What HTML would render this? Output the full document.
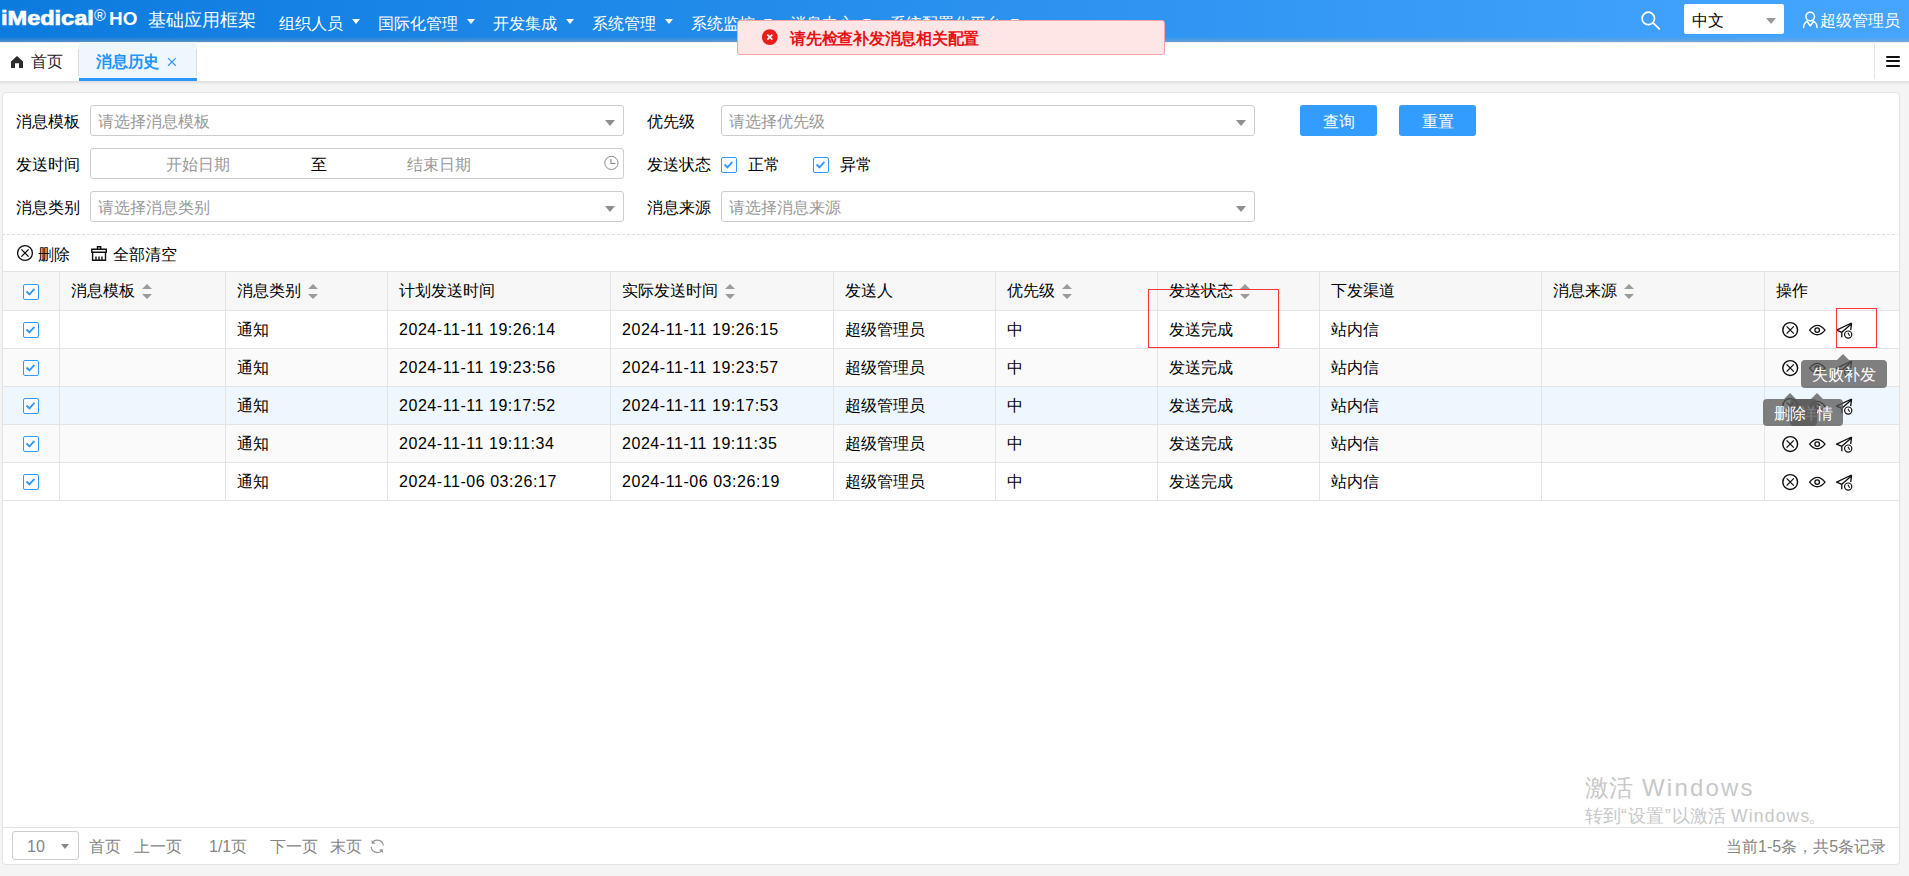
<!DOCTYPE html><html><head><meta charset="utf-8"><style>
*{box-sizing:border-box;margin:0;padding:0}
html,body{width:1909px;height:876px;overflow:hidden}
body{background:#f4f4f4;font-family:"Liberation Sans",sans-serif;font-size:16px;color:#000;position:relative}
div,span,svg{position:absolute}
.t{font-size:16px;line-height:16px;white-space:nowrap}
#hdr{left:0;top:0;width:1909px;height:42px;background:linear-gradient(90deg,#0c7bde 0%,#46a6ff 100%)}
#hdrb{left:0;top:37px;width:1909px;height:5px;background:linear-gradient(180deg,rgba(170,170,170,0),rgba(170,170,170,.45))}
.w{color:#fff}
.tri{width:0;height:0;border-left:4px solid transparent;border-right:4px solid transparent;border-top:5px solid #fff}
.dtri{width:0;height:0;border-left:5px solid transparent;border-right:5px solid transparent;border-top:6px solid #8f8f8f}
.inp{border:1px solid #cdcdcd;border-radius:3px;background:#fff;height:31px;width:534px}
.ph{color:#999}
.btn{background:#339cff;border-radius:3px;color:#fff;height:31px;width:77px}
.cb{width:16px;height:16px;border:1px solid #3399ff;border-radius:2px;background:#fff}
.hl{height:1px;background:#e3e3e3}
.vl{width:1px;background:#e3e3e3}
.pg{color:#858585}
.tip{background:rgba(85,85,85,.75);border-radius:4px;height:27px}
.num{letter-spacing:.55px}
</style></head><body>
<div id="hdr"></div><div id="hdrb"></div>
<span style="left:1px;top:6px;font-size:21px;line-height:24px;font-weight:bold;color:#fff;white-space:nowrap;transform:scaleX(1.12);transform-origin:0 0;-webkit-text-stroke:.7px #fff">iMedical</span>
<span style="left:94px;top:7px;font-size:16px;line-height:18px;color:#fff">&#174;</span>
<span style="left:109px;top:9px;font-size:18px;line-height:20px;font-weight:bold;color:#fff;white-space:nowrap;transform:scaleX(1.05);transform-origin:0 0">HO</span>
<span class="w" style="left:148px;top:11px;font-size:18px;line-height:18px;white-space:nowrap">基础应用框架</span>
<span class="t w" style="left:279px;top:16px;">组织人员</span>
<div class="tri" style="left:352px;top:19px"></div>
<span class="t w" style="left:378px;top:16px;">国际化管理</span>
<div class="tri" style="left:467px;top:19px"></div>
<span class="t w" style="left:493px;top:16px;">开发集成</span>
<div class="tri" style="left:566px;top:19px"></div>
<span class="t w" style="left:592px;top:16px;">系统管理</span>
<div class="tri" style="left:665px;top:19px"></div>
<span class="t w" style="left:691px;top:16px;">系统监控</span>
<div class="tri" style="left:764px;top:19px"></div>
<span class="t w" style="left:790px;top:16px;">消息中心</span>
<div class="tri" style="left:863px;top:19px"></div>
<span class="t w" style="left:890px;top:16px;">系统配置化平台</span>
<div class="tri" style="left:1011px;top:19px"></div>
<svg style="left:1636px;top:8px" width="30" height="26" viewBox="1636 8 30 26"><circle cx="1648.3" cy="18.4" r="6.2" fill="none" stroke="#fff" stroke-width="1.8"/><line x1="1653.3" y1="23.2" x2="1659.3" y2="28.8" stroke="#fff" stroke-width="1.8" stroke-linecap="round"/></svg>
<div style="left:1684px;top:4px;width:100px;height:30px;background:#fff;border-radius:2px"></div>
<span class="t " style="left:1692px;top:13px;color:#000">中文</span>
<div class="dtri" style="left:1766px;top:18px;border-top-color:#9a9a9a"></div>
<svg style="left:1798px;top:8px" width="26" height="24" viewBox="1798 8 26 24"><circle cx="1810.2" cy="16.6" r="4.3" fill="none" stroke="#fff" stroke-width="1.5"/><path d="M1803.6 27.4 C1803.6 24.2 1805 22.3 1807 21.3 L1810.3 26 L1813.6 21.3 C1815.6 22.3 1817 24.2 1817 27.4" fill="none" stroke="#fff" stroke-width="1.5" stroke-linecap="round" stroke-linejoin="round"/></svg>
<span class="t w" style="left:1820px;top:13px;">超级管理员</span>
<div style="left:0;top:42px;width:1909px;height:39px;background:#fff"></div>
<div style="left:0;top:42px;width:1909px;height:1px;background:#f1efed"></div>
<div style="left:0;top:81px;width:1909px;height:4px;background:linear-gradient(180deg,#dedede,#f4f4f4)"></div>
<svg style="left:8px;top:52px" width="20" height="20" viewBox="8 52 20 20"><path d="M11 61.4 L17 56 L23 61.4 V68 H19 V63.3 H15 V68 H11 Z" fill="#2d2d2d"/></svg>
<span class="t " style="left:31px;top:54px;color:#222">首页</span>
<div style="left:79px;top:42px;width:118px;height:39px;background:#eef7fe"></div>
<div style="left:79px;top:78px;width:118px;height:3px;background:#2d96fa"></div>
<div class="vl" style="left:78px;top:49px;height:27px;background:#dcdcdc"></div>
<div class="vl" style="left:196px;top:49px;height:27px;background:#dcdcdc"></div>
<span class="t " style="left:96px;top:54px;color:#1f95fd;font-weight:bold;letter-spacing:-.25px">消息历史</span>
<svg style="left:164px;top:54px" width="16" height="16" viewBox="164 54 16 16"><path d="M168 58.1 L175.8 65.7 M175.8 58.1 L168 65.7" stroke="#3399ff" stroke-width="1.2"/></svg>
<div style="left:1860px;top:42px;width:15px;height:37px;border-right:1px solid #e3e3e3;border-top:1px solid #eeeeee;border-radius:0 4px 0 0"></div>
<div style="left:1886px;top:55.8px;width:14px;height:2.2px;border-radius:1px;background:#111"></div>
<div style="left:1886px;top:60.2px;width:14px;height:2.2px;border-radius:1px;background:#111"></div>
<div style="left:1886px;top:64.9px;width:14px;height:2.2px;border-radius:1px;background:#111"></div>
<div style="left:2px;top:92px;width:1898px;height:773px;background:#fff;border:1px solid #e2e2e2;border-radius:4px"></div>
<span class="t " style="left:16px;top:114px;">消息模板</span>
<div class="inp" style="left:90px;top:105px"></div>
<span class="t ph" style="left:98px;top:114px;">请选择消息模板</span>
<div class="dtri" style="left:605px;top:120px"></div>
<span class="t " style="left:647px;top:114px;">优先级</span>
<div class="inp" style="left:721px;top:105px"></div>
<span class="t ph" style="left:729px;top:114px;">请选择优先级</span>
<div class="dtri" style="left:1236px;top:120px"></div>
<div class="btn" style="left:1300px;top:105px"></div>
<span class="t w" style="left:1323px;top:114px;">查询</span>
<div class="btn" style="left:1399px;top:105px"></div>
<span class="t w" style="left:1422px;top:114px;">重置</span>
<span class="t " style="left:16px;top:157px;">发送时间</span>
<div class="inp" style="left:90px;top:148px"></div>
<span class="t ph" style="left:166px;top:157px;">开始日期</span>
<span class="t " style="left:311px;top:157px;">至</span>
<span class="t ph" style="left:407px;top:157px;">结束日期</span>
<svg style="left:602px;top:154px" width="20" height="18" viewBox="602 154 20 18"><circle cx="611.4" cy="162.9" r="6.6" fill="none" stroke="#8a8a8a" stroke-width="1"/><path d="M610.9 159 V163.5 H615.5" fill="none" stroke="#8a8a8a" stroke-width="1.1"/></svg>
<span class="t " style="left:647px;top:157px;">发送状态</span>
<div class="cb" style="left:721px;top:157px"><svg style="left:1px;top:1px" width="14" height="14" viewBox="0 0 14 14"><path d="M1.5 5.5 L4.4 8.3 L9.4 2.9" fill="none" stroke="#3399ff" stroke-width="1.9"/></svg></div>
<span class="t " style="left:748px;top:157px;">正常</span>
<div class="cb" style="left:813px;top:157px"><svg style="left:1px;top:1px" width="14" height="14" viewBox="0 0 14 14"><path d="M1.5 5.5 L4.4 8.3 L9.4 2.9" fill="none" stroke="#3399ff" stroke-width="1.9"/></svg></div>
<span class="t " style="left:840px;top:157px;">异常</span>
<span class="t " style="left:16px;top:200px;">消息类别</span>
<div class="inp" style="left:90px;top:191px"></div>
<span class="t ph" style="left:98px;top:200px;">请选择消息类别</span>
<div class="dtri" style="left:605px;top:206px"></div>
<span class="t " style="left:647px;top:200px;">消息来源</span>
<div class="inp" style="left:721px;top:191px"></div>
<span class="t ph" style="left:729px;top:200px;">请选择消息来源</span>
<div class="dtri" style="left:1236px;top:206px"></div>
<div style="left:3px;top:234px;width:1895px;height:1px;background:repeating-linear-gradient(90deg,#dcdcdc 0 3px,transparent 3px 5px);background-position:-1px 0"></div>
<svg style="left:14px;top:243px" width="22" height="20" viewBox="14 243 22 20"><circle cx="25" cy="253" r="7.4" fill="none" stroke="#111" stroke-width="1.3"/><path d="M21.4 249.4 L28.6 256.6 M28.6 249.4 L21.4 256.6" stroke="#111" stroke-width="1.3"/></svg>
<span class="t " style="left:38px;top:247px;">删除</span>
<svg style="left:88px;top:243px" width="22" height="20" viewBox="88 243 22 20"><path d="M97.5 249.2 V246.7 H100.7 V249.2 M91.8 249.2 H106.3 V252.3 H91.8 Z M92.6 252.3 V260.3 H105.5 V252.3 M96 260.3 V256.5 M99 260.3 V256.5 M102 260.3 V256.5" fill="none" stroke="#111" stroke-width="1.4"/></svg>
<span class="t " style="left:113px;top:247px;">全部清空</span>
<div style="left:3px;top:272px;width:1896px;height:38px;background:#f7f7f7"></div>
<div style="left:3px;top:348px;width:1896px;height:38px;background:#fafafa"></div>
<div style="left:3px;top:386px;width:1896px;height:38px;background:#eef6fe"></div>
<div style="left:3px;top:424px;width:1896px;height:38px;background:#fafafa"></div>
<div class="hl" style="left:3px;top:271px;width:1896px"></div>
<div class="hl" style="left:3px;top:310px;width:1896px"></div>
<div class="hl" style="left:3px;top:348px;width:1896px"></div>
<div class="hl" style="left:3px;top:386px;width:1896px"></div>
<div class="hl" style="left:3px;top:424px;width:1896px"></div>
<div class="hl" style="left:3px;top:462px;width:1896px"></div>
<div class="hl" style="left:3px;top:500px;width:1896px"></div>
<div class="vl" style="left:59px;top:271px;height:229px"></div>
<div class="vl" style="left:225px;top:271px;height:229px"></div>
<div class="vl" style="left:387px;top:271px;height:229px"></div>
<div class="vl" style="left:610px;top:271px;height:229px"></div>
<div class="vl" style="left:833px;top:271px;height:229px"></div>
<div class="vl" style="left:995px;top:271px;height:229px"></div>
<div class="vl" style="left:1157px;top:271px;height:229px"></div>
<div class="vl" style="left:1319px;top:271px;height:229px"></div>
<div class="vl" style="left:1541px;top:271px;height:229px"></div>
<div class="vl" style="left:1764px;top:271px;height:229px"></div>
<div class="cb" style="left:23px;top:284px"><svg style="left:1px;top:1px" width="14" height="14" viewBox="0 0 14 14"><path d="M1.5 5.5 L4.4 8.3 L9.4 2.9" fill="none" stroke="#3399ff" stroke-width="1.9"/></svg></div>
<span class="t " style="left:71px;top:283px;">消息模板</span>
<svg style="left:142px;top:284px" width="10" height="15" viewBox="0 0 10 15"><path d="M5 0 L10 5 H0 Z M0 10 H10 L5 15 Z" fill="#9b9b9b"/></svg>
<span class="t " style="left:237px;top:283px;">消息类别</span>
<svg style="left:308px;top:284px" width="10" height="15" viewBox="0 0 10 15"><path d="M5 0 L10 5 H0 Z M0 10 H10 L5 15 Z" fill="#9b9b9b"/></svg>
<span class="t " style="left:399px;top:283px;">计划发送时间</span>
<span class="t " style="left:622px;top:283px;">实际发送时间</span>
<svg style="left:725px;top:284px" width="10" height="15" viewBox="0 0 10 15"><path d="M5 0 L10 5 H0 Z M0 10 H10 L5 15 Z" fill="#9b9b9b"/></svg>
<span class="t " style="left:845px;top:283px;">发送人</span>
<span class="t " style="left:1007px;top:283px;">优先级</span>
<svg style="left:1062px;top:284px" width="10" height="15" viewBox="0 0 10 15"><path d="M5 0 L10 5 H0 Z M0 10 H10 L5 15 Z" fill="#9b9b9b"/></svg>
<span class="t " style="left:1169px;top:283px;">发送状态</span>
<svg style="left:1240px;top:284px" width="10" height="15" viewBox="0 0 10 15"><path d="M5 0 L10 5 H0 Z M0 10 H10 L5 15 Z" fill="#9b9b9b"/></svg>
<span class="t " style="left:1331px;top:283px;">下发渠道</span>
<span class="t " style="left:1553px;top:283px;">消息来源</span>
<svg style="left:1624px;top:284px" width="10" height="15" viewBox="0 0 10 15"><path d="M5 0 L10 5 H0 Z M0 10 H10 L5 15 Z" fill="#9b9b9b"/></svg>
<span class="t " style="left:1776px;top:283px;">操作</span>
<div class="cb" style="left:23px;top:322px"><svg style="left:1px;top:1px" width="14" height="14" viewBox="0 0 14 14"><path d="M1.5 5.5 L4.4 8.3 L9.4 2.9" fill="none" stroke="#3399ff" stroke-width="1.9"/></svg></div>
<span class="t " style="left:237px;top:322px;">通知</span>
<span class="t num" style="left:399px;top:322px;">2024-11-11 19:26:14</span>
<span class="t num" style="left:622px;top:322px;">2024-11-11 19:26:15</span>
<span class="t " style="left:845px;top:322px;">超级管理员</span>
<span class="t " style="left:1007px;top:322px;">中</span>
<span class="t " style="left:1169px;top:322px;">发送完成</span>
<span class="t " style="left:1331px;top:322px;">站内信</span>
<svg style="left:1776px;top:315px" width="84" height="28" viewBox="1776 315 84 28"><circle cx="1790.2" cy="330.0" r="7.4" fill="none" stroke="#111" stroke-width="1.45"/><path d="M1786.6 326.40000000000003 L1793.8 333.6 M1793.8 326.40000000000003 L1786.6 333.6" stroke="#111" stroke-width="1.3"/><path d="M1809.6 330.1 Q1817.3 320.6 1825 330.1 Q1817.3 339.40000000000003 1809.6 330.1 Z" fill="none" stroke="#111" stroke-width="1.3"/><circle cx="1817.2" cy="330.1" r="2.3" fill="none" stroke="#111" stroke-width="1.3"/><path d="M1851.6 323.0 L1836.6 330.2 L1841.8 332.3 V337.3 M1841.8 332.3 L1851 324.3 M1851.6 323.0 L1850.7 330.2" fill="none" stroke="#111" stroke-width="1.3" stroke-linejoin="round"/><circle cx="1848.2" cy="334.6" r="3.6" fill="#fff" stroke="#111" stroke-width="1.2"/><path d="M1848 332.8 L1849.6 335.8" stroke="#111" stroke-width="1.1"/></svg>
<div class="cb" style="left:23px;top:360px"><svg style="left:1px;top:1px" width="14" height="14" viewBox="0 0 14 14"><path d="M1.5 5.5 L4.4 8.3 L9.4 2.9" fill="none" stroke="#3399ff" stroke-width="1.9"/></svg></div>
<span class="t " style="left:237px;top:360px;">通知</span>
<span class="t num" style="left:399px;top:360px;">2024-11-11 19:23:56</span>
<span class="t num" style="left:622px;top:360px;">2024-11-11 19:23:57</span>
<span class="t " style="left:845px;top:360px;">超级管理员</span>
<span class="t " style="left:1007px;top:360px;">中</span>
<span class="t " style="left:1169px;top:360px;">发送完成</span>
<span class="t " style="left:1331px;top:360px;">站内信</span>
<svg style="left:1776px;top:353px" width="84" height="28" viewBox="1776 353 84 28"><circle cx="1790.2" cy="368.0" r="7.4" fill="none" stroke="#111" stroke-width="1.45"/><path d="M1786.6 364.40000000000003 L1793.8 371.6 M1793.8 364.40000000000003 L1786.6 371.6" stroke="#111" stroke-width="1.3"/><path d="M1809.6 368.1 Q1817.3 358.6 1825 368.1 Q1817.3 377.40000000000003 1809.6 368.1 Z" fill="none" stroke="#111" stroke-width="1.3"/><circle cx="1817.2" cy="368.1" r="2.3" fill="none" stroke="#111" stroke-width="1.3"/><path d="M1851.6 361.0 L1836.6 368.2 L1841.8 370.3 V375.3 M1841.8 370.3 L1851 362.3 M1851.6 361.0 L1850.7 368.2" fill="none" stroke="#111" stroke-width="1.3" stroke-linejoin="round"/><circle cx="1848.2" cy="372.6" r="3.6" fill="#fff" stroke="#111" stroke-width="1.2"/><path d="M1848 370.8 L1849.6 373.8" stroke="#111" stroke-width="1.1"/></svg>
<div class="cb" style="left:23px;top:398px"><svg style="left:1px;top:1px" width="14" height="14" viewBox="0 0 14 14"><path d="M1.5 5.5 L4.4 8.3 L9.4 2.9" fill="none" stroke="#3399ff" stroke-width="1.9"/></svg></div>
<span class="t " style="left:237px;top:398px;">通知</span>
<span class="t num" style="left:399px;top:398px;">2024-11-11 19:17:52</span>
<span class="t num" style="left:622px;top:398px;">2024-11-11 19:17:53</span>
<span class="t " style="left:845px;top:398px;">超级管理员</span>
<span class="t " style="left:1007px;top:398px;">中</span>
<span class="t " style="left:1169px;top:398px;">发送完成</span>
<span class="t " style="left:1331px;top:398px;">站内信</span>
<svg style="left:1776px;top:391px" width="84" height="28" viewBox="1776 391 84 28"><circle cx="1790.2" cy="406.0" r="7.4" fill="none" stroke="#111" stroke-width="1.45"/><path d="M1786.6 402.40000000000003 L1793.8 409.6 M1793.8 402.40000000000003 L1786.6 409.6" stroke="#111" stroke-width="1.3"/><path d="M1809.6 406.1 Q1817.3 396.6 1825 406.1 Q1817.3 415.40000000000003 1809.6 406.1 Z" fill="none" stroke="#111" stroke-width="1.3"/><circle cx="1817.2" cy="406.1" r="2.3" fill="none" stroke="#111" stroke-width="1.3"/><path d="M1851.6 399.0 L1836.6 406.2 L1841.8 408.3 V413.3 M1841.8 408.3 L1851 400.3 M1851.6 399.0 L1850.7 406.2" fill="none" stroke="#111" stroke-width="1.3" stroke-linejoin="round"/><circle cx="1848.2" cy="410.6" r="3.6" fill="#fff" stroke="#111" stroke-width="1.2"/><path d="M1848 408.8 L1849.6 411.8" stroke="#111" stroke-width="1.1"/></svg>
<div class="cb" style="left:23px;top:436px"><svg style="left:1px;top:1px" width="14" height="14" viewBox="0 0 14 14"><path d="M1.5 5.5 L4.4 8.3 L9.4 2.9" fill="none" stroke="#3399ff" stroke-width="1.9"/></svg></div>
<span class="t " style="left:237px;top:436px;">通知</span>
<span class="t num" style="left:399px;top:436px;">2024-11-11 19:11:34</span>
<span class="t num" style="left:622px;top:436px;">2024-11-11 19:11:35</span>
<span class="t " style="left:845px;top:436px;">超级管理员</span>
<span class="t " style="left:1007px;top:436px;">中</span>
<span class="t " style="left:1169px;top:436px;">发送完成</span>
<span class="t " style="left:1331px;top:436px;">站内信</span>
<svg style="left:1776px;top:429px" width="84" height="28" viewBox="1776 429 84 28"><circle cx="1790.2" cy="444.0" r="7.4" fill="none" stroke="#111" stroke-width="1.45"/><path d="M1786.6 440.40000000000003 L1793.8 447.6 M1793.8 440.40000000000003 L1786.6 447.6" stroke="#111" stroke-width="1.3"/><path d="M1809.6 444.1 Q1817.3 434.6 1825 444.1 Q1817.3 453.40000000000003 1809.6 444.1 Z" fill="none" stroke="#111" stroke-width="1.3"/><circle cx="1817.2" cy="444.1" r="2.3" fill="none" stroke="#111" stroke-width="1.3"/><path d="M1851.6 437.0 L1836.6 444.2 L1841.8 446.3 V451.3 M1841.8 446.3 L1851 438.3 M1851.6 437.0 L1850.7 444.2" fill="none" stroke="#111" stroke-width="1.3" stroke-linejoin="round"/><circle cx="1848.2" cy="448.6" r="3.6" fill="#fff" stroke="#111" stroke-width="1.2"/><path d="M1848 446.8 L1849.6 449.8" stroke="#111" stroke-width="1.1"/></svg>
<div class="cb" style="left:23px;top:474px"><svg style="left:1px;top:1px" width="14" height="14" viewBox="0 0 14 14"><path d="M1.5 5.5 L4.4 8.3 L9.4 2.9" fill="none" stroke="#3399ff" stroke-width="1.9"/></svg></div>
<span class="t " style="left:237px;top:474px;">通知</span>
<span class="t num" style="left:399px;top:474px;">2024-11-06 03:26:17</span>
<span class="t num" style="left:622px;top:474px;">2024-11-06 03:26:19</span>
<span class="t " style="left:845px;top:474px;">超级管理员</span>
<span class="t " style="left:1007px;top:474px;">中</span>
<span class="t " style="left:1169px;top:474px;">发送完成</span>
<span class="t " style="left:1331px;top:474px;">站内信</span>
<svg style="left:1776px;top:467px" width="84" height="28" viewBox="1776 467 84 28"><circle cx="1790.2" cy="482.0" r="7.4" fill="none" stroke="#111" stroke-width="1.45"/><path d="M1786.6 478.40000000000003 L1793.8 485.6 M1793.8 478.40000000000003 L1786.6 485.6" stroke="#111" stroke-width="1.3"/><path d="M1809.6 482.1 Q1817.3 472.6 1825 482.1 Q1817.3 491.40000000000003 1809.6 482.1 Z" fill="none" stroke="#111" stroke-width="1.3"/><circle cx="1817.2" cy="482.1" r="2.3" fill="none" stroke="#111" stroke-width="1.3"/><path d="M1851.6 475.0 L1836.6 482.2 L1841.8 484.3 V489.3 M1841.8 484.3 L1851 476.3 M1851.6 475.0 L1850.7 482.2" fill="none" stroke="#111" stroke-width="1.3" stroke-linejoin="round"/><circle cx="1848.2" cy="486.6" r="3.6" fill="#fff" stroke="#111" stroke-width="1.2"/><path d="M1848 484.8 L1849.6 487.8" stroke="#111" stroke-width="1.1"/></svg>
<div style="left:1148px;top:289px;width:131px;height:59px;border:1px solid #ff3434"></div>
<div style="left:1836px;top:308px;width:41px;height:40px;border:1px solid #ff3434"></div>
<div style="left:1837px;top:354px;width:0;height:0;border-left:6px solid transparent;border-right:6px solid transparent;border-bottom:6px solid rgba(85,85,85,.75)"></div>
<div class="tip" style="left:1801px;top:360px;width:86px;height:28px"></div>
<span class="t w" style="left:1812px;top:367px;">失败补发</span>
<div style="left:1811px;top:393px;width:0;height:0;border-left:6px solid transparent;border-right:6px solid transparent;border-bottom:6px solid rgba(85,85,85,.75)"></div>
<div class="tip" style="left:1790px;top:399px;width:53px;height:27px"></div>
<span class="t w" style="left:1801px;top:406px;">详情</span>
<div style="left:1784px;top:393px;width:0;height:0;border-left:6px solid transparent;border-right:6px solid transparent;border-bottom:6px solid rgba(85,85,85,.75)"></div>
<div class="tip" style="left:1763px;top:399px;width:54px;height:27px"></div>
<span class="t w" style="left:1774px;top:406px;">删除</span>
<div class="hl" style="left:3px;top:827px;width:1896px"></div>
<div style="left:12px;top:831px;width:67px;height:29px;border:1px solid #cdcdcd;border-radius:3px;background:#fff"></div>
<span class="t pg" style="left:27px;top:839px;">10</span>
<div style="left:61px;top:844px;width:0;height:0;border-left:4px solid transparent;border-right:4px solid transparent;border-top:5px solid #888"></div>
<span class="t pg" style="left:89px;top:839px;">首页</span>
<span class="t pg" style="left:134px;top:839px;">上一页</span>
<span class="t pg" style="left:209px;top:839px;">1/1页</span>
<span class="t pg" style="left:270px;top:839px;">下一页</span>
<span class="t pg" style="left:330px;top:839px;">末页</span>
<svg style="left:366px;top:836px" width="22" height="22" viewBox="366 836 22 22"><path d="M372.4 842.3 A6.3 6.3 0 0 1 383.4 845.6" fill="none" stroke="#999" stroke-width="1.2"/><path d="M371.2 846.4 A6.3 6.3 0 0 0 382.2 850.4" fill="none" stroke="#999" stroke-width="1.2"/><path d="M371.5 840 L371.8 844 L375.5 843.4 Z" fill="#999"/><path d="M383.2 853 L382.6 849 L379 849.8 Z" fill="#999"/></svg>
<span class="t pg" style="left:1726px;top:839px">当前1-5条，共5条记录</span>
<span style="left:1585px;top:776px;font-size:24px;line-height:24px;color:#c8c8c8;white-space:nowrap;">激活</span>
<span style="left:1642px;top:776px;font-size:24px;line-height:24px;letter-spacing:2.2px;color:#c8c8c8;white-space:nowrap;">Windows</span>
<span style="left:1585px;top:808px;font-size:17.5px;line-height:17px;letter-spacing:0px;color:#c8c8c8;white-space:nowrap;">转到</span>
<span style="left:1621px;top:808px;font-size:17.5px;line-height:17px;letter-spacing:0px;color:#c8c8c8;white-space:nowrap;">“</span>
<span style="left:1628px;top:808px;font-size:17.5px;line-height:17px;letter-spacing:0px;color:#c8c8c8;white-space:nowrap;">设置</span>
<span style="left:1665px;top:808px;font-size:17.5px;line-height:17px;letter-spacing:0px;color:#c8c8c8;white-space:nowrap;">”</span>
<span style="left:1672px;top:808px;font-size:17.5px;line-height:17px;letter-spacing:0px;color:#c8c8c8;white-space:nowrap;">以激活</span>
<span style="left:1731px;top:808px;font-size:17.5px;line-height:17px;letter-spacing:1.2px;color:#c8c8c8;white-space:nowrap;">Windows</span>
<span style="left:1808px;top:808px;font-size:17.5px;line-height:17px;letter-spacing:0px;color:#c8c8c8;white-space:nowrap;">。</span>
<div style="left:737px;top:20px;width:428px;height:35px;background:#fee6e6;border:1px solid #f5a6a6;border-radius:3px"></div>
<svg style="left:760px;top:28px" width="20" height="20" viewBox="760 28 20 20"><circle cx="769.8" cy="37.1" r="7.9" fill="#ea1c1c"/><path d="M767.3 34.6 L772.3 39.6 M772.3 34.6 L767.3 39.6" stroke="#fff" stroke-width="1.6"/></svg>
<span class="t" style="left:790px;top:31px;color:#e81414;font-weight:bold;letter-spacing:-.25px">请先检查补发消息相关配置</span>
</body></html>
